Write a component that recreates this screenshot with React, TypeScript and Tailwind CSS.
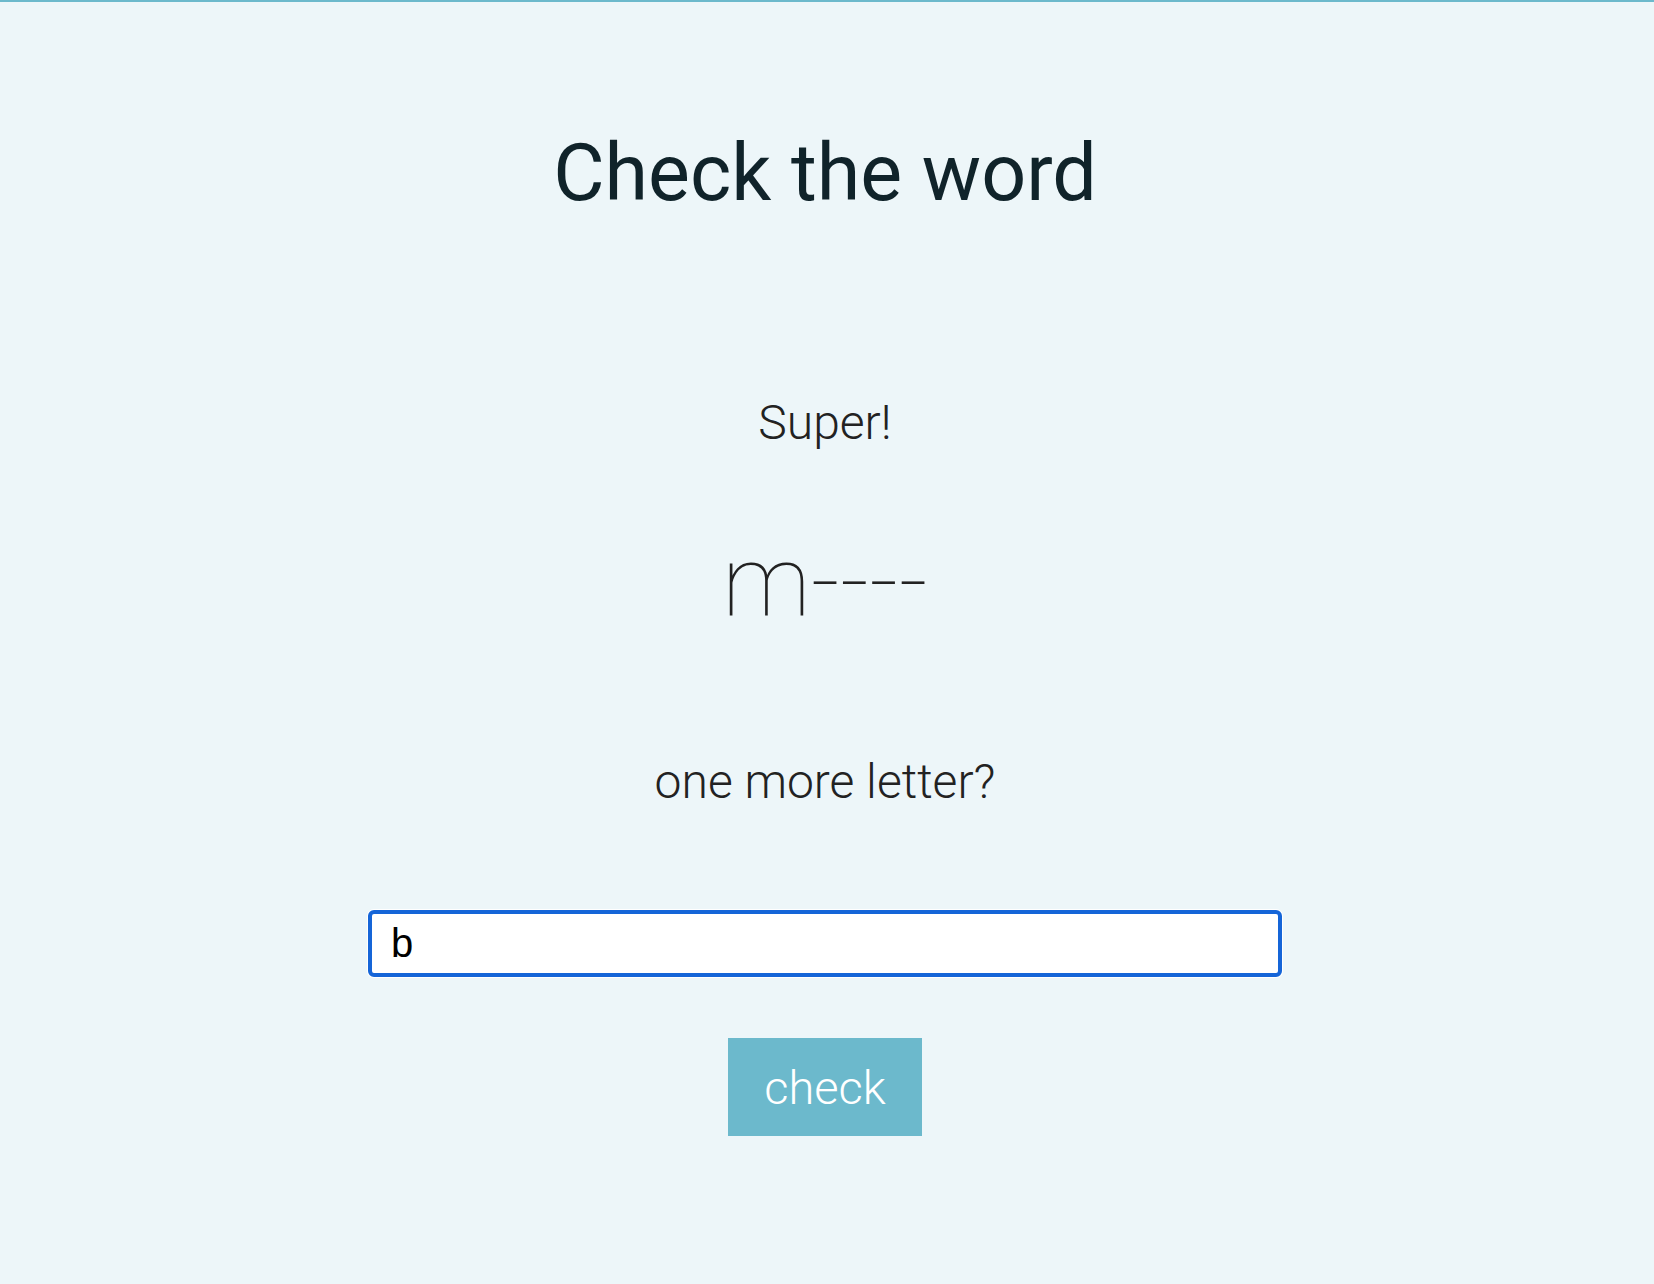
export default function App() {
  return (
    <div className="min-h-screen border-t-2 border-[#6cb9cc] bg-[#edf6f9] font-['Roboto',sans-serif]">
      <main className="flex flex-col items-center pr-1">
        <h1 className="mt-[132px] text-[79px] font-normal leading-none text-[#10232a]">
          Check the word
        </h1>
        <p className="mt-[186px] text-[48px] font-light leading-none text-[#222]">Super!</p>
        <p className="mt-[85px] text-[99px] font-thin leading-none text-[#222]">m----</p>
        <p className="mt-[127px] text-[48px] font-light leading-none text-[#222]">one more letter?</p>
        <input
          className="mt-[104px] h-[67px] w-[914px] rounded-md border-[4px] border-[#1565d8] bg-white px-[19px] font-['Liberation_Sans',sans-serif] text-[40px] text-black caret-black shadow-[0_0_0_1px_#ffffff] outline-none"
          defaultValue="b"
          autoFocus
        />
        <button
          type="button"
          className="mt-[61px] h-[98px] w-[194px] bg-[#6cb9cc] text-[47px] font-light leading-none text-white"
        >
          check
        </button>
      </main>
    </div>
  );
}
